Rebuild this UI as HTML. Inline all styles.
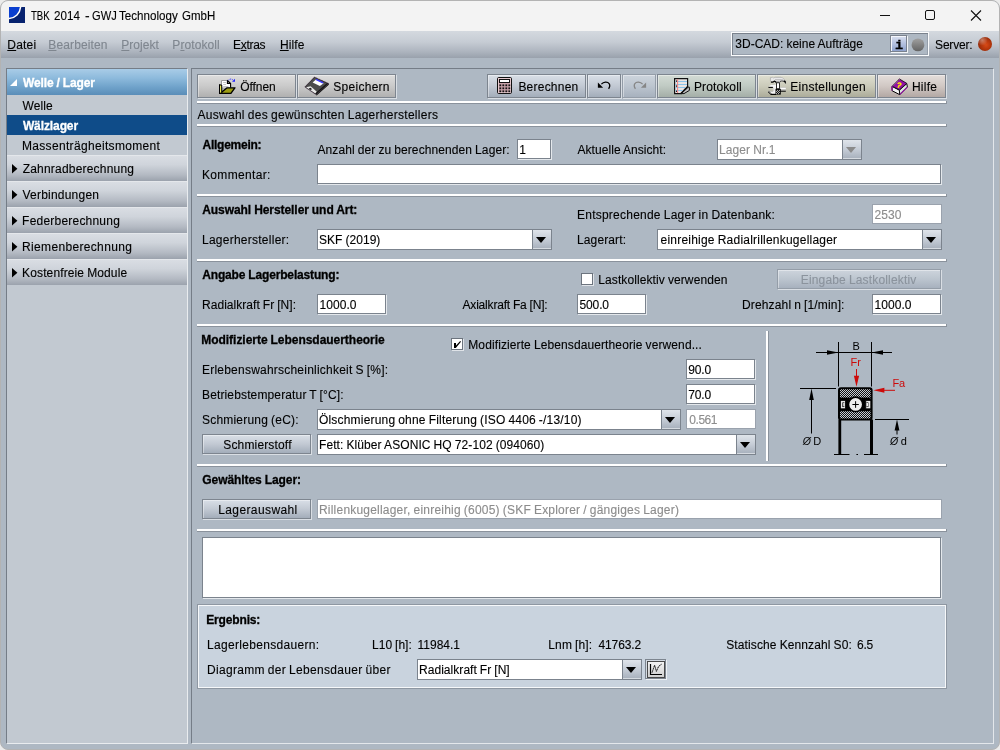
<!DOCTYPE html>
<html lang="de">
<head>
<meta charset="utf-8">
<title>TBK 2014 - GWJ Technology GmbH</title>
<style>
html,body{margin:0;padding:0;}
body{width:1000px;height:750px;overflow:hidden;background:#ebebeb;font-family:"Liberation Sans",sans-serif;font-size:12px;color:#000;}
#win{position:absolute;left:0;top:0;width:1000px;height:750px;background:#aeb8c3;border-radius:8px;overflow:hidden;border:1px solid #b3b3b3;box-sizing:border-box;}
#o{position:absolute;left:-1px;top:-1px;width:1000px;height:750px;will-change:transform;}
.a{position:absolute;box-sizing:border-box;}
.t{position:absolute;white-space:pre;line-height:14px;height:14px;-webkit-text-stroke:0.12px currentColor;}
.b{font-weight:bold;-webkit-text-stroke:0.3px currentColor;}
u{text-decoration:underline;text-underline-offset:1px;text-decoration-thickness:1px;}
.sep{position:absolute;left:197px;width:750px;height:3px;box-sizing:border-box;background:#fff;border-right:1px solid #8a929c;border-bottom:1px solid #8a929c;}
.inp{position:absolute;box-sizing:border-box;background:#fff;border:1px solid #7b838d;box-shadow:1px 1px 0 #e4e8ec;height:20px;}
.inp.off{border-color:#9aa2ad;box-shadow:none;}
.btn{position:absolute;box-sizing:border-box;border:1px solid #7d858f;box-shadow:1px 1px 0 #d9dee4, inset 1px 1px 0 rgba(255,255,255,.4);background:linear-gradient(#dddddd,#cacaca 50%,#b0b0b0);height:24px;}
.btn.blue{background:linear-gradient(#d9dfe7,#c2c9d3 50%,#a3adba);}
.btn.off{background:linear-gradient(#cdd4dc,#bcc5cf 50%,#a7b1be);border-color:#949da8;}
.btn.green{background:linear-gradient(#d3dbd5,#c0cac3 50%,#a4aea7);}
.btn.olive{background:linear-gradient(#dfdfd1,#cbcbba 50%,#acac9a);}
.btn.rose{background:linear-gradient(#e4dedb,#d1c8c4 50%,#b3a8a4);}
.cat{position:absolute;left:7px;width:180px;height:26px;box-sizing:border-box;background:linear-gradient(#d9dde3 0%,#cfd4db 35%,#b4bac3 75%,#9ba2ad 100%);border-top:1px solid #e4e7eb;}
.cat svg{position:absolute;left:5px;top:8px;}
.combo{position:absolute;box-sizing:border-box;height:21px;border:1px solid #7b838d;background:#fff;}
.combo b{position:absolute;right:0;top:0;bottom:0;width:19px;box-sizing:border-box;background:linear-gradient(#dfe4ea,#c5ccd6 50%,#a6afbb);border-left:1px solid #7b838d;box-shadow:inset 0 -1px 0 #d5dae0;}
.combo b:after{content:"";position:absolute;left:3px;top:7px;border-top:6px solid #000;border-left:5px solid transparent;border-right:5px solid transparent;}
.combo.off b:after{border-top-color:#8a8a8a;}
.chk{position:absolute;box-sizing:border-box;width:12px;height:12px;background:#fff;border:1px solid #6c747e;box-shadow:1px 1px 0 #dfe3e8;}

</style>
</head>
<body>
<div id="win"><div id="o">
<div class="a" style="left:1px;top:1px;width:998px;height:30px;background:#f3f3f3;"></div>
<div class="a" style="left:1px;top:31px;width:998px;height:27px;background:linear-gradient(#d4d9df 0%,#c6ccd4 40%,#aeb5bf 75%,#99a1ac 100%);"></div>
<svg class="a" style="left:870px;top:1px" width="128" height="30" viewBox="0 0 128 30"><g stroke="#111" stroke-width="1" fill="none"><path d="M10 14.5H20"/><rect x="55.5" y="9.5" width="9" height="9" rx="1.5"/><path d="M101 9.5L111 19.5M111 9.5L101 19.5" stroke-width="1.1"/></g></svg>
<!-- 3D-CAD box -->
<div class="a" style="left:731px;top:32px;width:198px;height:24px;border:1px solid #fbfcfd;box-shadow:inset 1px 1px 0 #7a828d, inset -1px -1px 0 #959eaa;background:#aeb8c3;"></div>
<div class="a" style="left:890px;top:35px;width:17px;height:17px;border:1px solid #7a828e;box-shadow:1px 1px 0 #f2f4f7, inset 1px 1px 0 #f4f6fb;background:linear-gradient(#d9e0f0,#b4c1df 50%,#8fa3cd);"></div>
<div class="t b" style="left:894.9px;top:37.9px;font-family:'Liberation Mono',monospace;font-size:13.6px;line-height:16px;height:16px;">i</div>
<svg class="a" style="left:910px;top:37px" width="16" height="16" viewBox="910 37 16 16"><defs><linearGradient id="gc" x1="0" y1="0" x2="0" y2="1"><stop offset="0" stop-color="#a0a0a0"/><stop offset="0.5" stop-color="#828282"/><stop offset="1" stop-color="#646464"/></linearGradient></defs><circle cx="917.95" cy="44.9" r="6.4" fill="url(#gc)"/></svg>
<div class="a" style="left:978px;top:37px;width:14px;height:14px;border-radius:50%;background:radial-gradient(circle at 30% 22%,rgba(255,255,255,.38) 0%,rgba(255,255,255,0) 38%),radial-gradient(circle at 58% 56%,#d84a17 0%,#b9380c 35%,#942a09 70%,#7a2207 100%);"></div>

<!-- sidebar -->
<div class="a" style="left:6px;top:68px;width:182px;height:676px;background:#c2c9d1;border:1px solid;border-color:#757d87 #e9ecef #e9ecef #757d87;"></div>
<div class="a" style="left:7px;top:69px;width:180px;height:26px;background:linear-gradient(#a9cce7 0%,#8dbadc 35%,#6fa2ca 70%,#5a8db8 100%);"></div>
<div class="a" style="left:10px;top:79px;width:0;height:0;border-bottom:7px solid #fff;border-left:7px solid transparent;"></div>
<div class="a" style="left:7px;top:115px;width:180px;height:20px;background:#0f4c89;"></div>
<div class="cat" style="top:155px"><svg width="6" height="10" viewBox="0 0 6 10"><path d="M0 0L5.4 4.75L0 9.5Z" fill="#000"/></svg></div>
<div class="cat" style="top:181px"><svg width="6" height="10" viewBox="0 0 6 10"><path d="M0 0L5.4 4.75L0 9.5Z" fill="#000"/></svg></div>
<div class="cat" style="top:207px"><svg width="6" height="10" viewBox="0 0 6 10"><path d="M0 0L5.4 4.75L0 9.5Z" fill="#000"/></svg></div>
<div class="cat" style="top:233px"><svg width="6" height="10" viewBox="0 0 6 10"><path d="M0 0L5.4 4.75L0 9.5Z" fill="#000"/></svg></div>
<div class="cat" style="top:259px"><svg width="6" height="10" viewBox="0 0 6 10"><path d="M0 0L5.4 4.75L0 9.5Z" fill="#000"/></svg></div>

<!-- main panel -->
<div class="a" style="left:191px;top:68px;width:803px;height:676px;border:1px solid;border-color:#757d87 #e3e7eb #e3e7eb #757d87;"></div>
<!-- toolbar -->
<div class="btn" style="left:197px;top:74px;width:99px;"></div>
<div class="btn" style="left:297px;top:74px;width:99px;"></div>
<div class="btn blue" style="left:487px;top:74px;width:99px;"></div>
<div class="btn blue" style="left:587px;top:74px;width:34px;"></div>
<div class="btn off" style="left:622px;top:74px;width:34px;"></div>
<div class="btn green" style="left:657px;top:74px;width:99px;"></div>
<div class="btn olive" style="left:757px;top:74px;width:119px;"></div>
<div class="btn rose" style="left:877px;top:74px;width:69px;"></div>

<div class="sep" style="top:101px"></div>
<div class="sep" style="top:124px"></div>
<div class="sep" style="top:194px"></div>
<div class="sep" style="top:259px"></div>
<div class="sep" style="top:324px"></div>
<div class="sep" style="top:464px"></div>
<div class="sep" style="top:529px"></div>
<div class="a" style="left:766px;top:331px;width:3px;height:130px;background:#fff;border-right:1px solid #8a929c;"></div>

<div class="inp" style="left:517px;top:139px;width:34px;"></div>
<div class="combo off" style="left:717px;top:139px;width:145px;"><b></b></div>
<div class="inp" style="left:317px;top:164px;width:624px;"></div>

<div class="inp off" style="left:872px;top:204px;width:70px;"></div>
<div class="combo" style="left:317px;top:229px;width:235px;"><b></b></div>
<div class="combo" style="left:657px;top:229px;width:285px;"><b></b></div>

<div class="chk" style="left:581px;top:273px;"></div>
<div class="btn off" style="left:777px;top:269px;width:164px;height:20px;"></div>
<div class="inp" style="left:317px;top:294px;width:69px;"></div>
<div class="inp" style="left:577px;top:294px;width:69px;"></div>
<div class="inp" style="left:872px;top:294px;width:69px;"></div>

<div class="chk" style="left:451px;top:338px;"></div>
<div class="inp" style="left:686px;top:359px;width:69px;"></div>
<div class="inp" style="left:686px;top:384px;width:69px;"></div>
<div class="combo" style="left:317px;top:409px;width:364px;"><b></b></div>
<div class="inp off" style="left:686px;top:409px;width:70px;"></div>
<div class="btn blue" style="left:202px;top:434px;width:109px;height:20px;"></div>
<div class="combo" style="left:317px;top:434px;width:439px;"><b></b></div>

<div class="btn blue" style="left:202px;top:499px;width:109px;height:20px;"></div>
<div class="inp off" style="left:317px;top:499px;width:625px;"></div>
<div class="inp" style="left:202px;top:537px;width:739px;height:61px;"></div>

<div class="a" style="left:197px;top:604px;width:750px;height:85px;background:#c9d3de;border:1px solid #8e97a2;box-shadow:inset 0 0 0 1px #f6f8fa;"></div>
<div class="combo" style="left:417px;top:659px;width:225px;"><b></b></div>
<div class="btn" style="left:645px;top:659px;width:21px;height:20px;background:#d3dae2;box-shadow:1px 1px 0 #eef1f4;"></div>

<svg class="a" style="left:9px;top:7px" width="16" height="16" viewBox="0 0 16 16"><rect width="16" height="16" fill="#07226f"/><path d="M0 0H11C10.5 6 6 10.5 0 11Z" fill="#0a3fd0"/><path d="M11.6 0C11 6.4 6.4 11 0 11.6" fill="none" stroke="#fff" stroke-width="1.5"/></svg>
<!-- open -->
<svg class="a" style="left:219px;top:78px" width="17" height="16" viewBox="0 0 17 16">
<path d="M2.5 2.5H8.2L11.5 5.6V10H2.5Z" fill="#fff" stroke="#9a9a9a"/>
<path d="M4.2 4.5H7M4.2 6.5H7M4.2 8.5H9.5" stroke="#c4c4c4"/>
<path d="M8.2 2.2L11.6 5.6V9.5M8.4 2.5V5.4H11" fill="none" stroke="#000" stroke-width="1.1"/>
<path d="M0.6 6.8V15.4H11.9L15.9 9.9H7.8L2.6 14.2V7.5Z" fill="#9c9c12" stroke="#000" stroke-width="1.35" stroke-linejoin="round"/>
<path d="M1.6 7.4V14.6" stroke="#e4e450" stroke-width="1.2"/>
<path d="M9.2 2.4C10.3 0.6 13 0.6 14.3 2.4" fill="none" stroke="#3a3aff" stroke-width="0.9" stroke-dasharray="1.2 0.8"/>
<path d="M16 0.8V3.8H13Z" fill="#2222ff"/>
</svg>
<!-- save -->
<svg class="a" style="left:304px;top:76px" width="26" height="20" viewBox="304 76 26 20">
<path d="M314.4 77L328.8 83.6L316.2 94.8L304.8 87Z" fill="#161616" stroke="#4a2a4a" stroke-width="0.7" stroke-dasharray="1 0.7"/><path d="M314.4 77.6L326.8 83.3L315.6 93L305.6 86.8Z" fill="#4c4c4c"/>
<path d="M316 79.4L323.6 83.2L319.9 86L312.6 82.4Z" fill="#fff"/>
<path d="M316.3 78.7L323.6 82.2L322.6 83.4L315.6 79.9Z" fill="#3a3aff"/>
<path d="M306 87.2L310.6 86.2L316.6 91.6L315.4 93.6Z" fill="#e8e8e8"/>
<path d="M308.6 88.4L310.6 87.8L312.2 89.2L310 90Z" fill="#222"/>
<path d="M316.2 94.8L328.8 83.6L328.8 84.8L316.6 95.4Z" fill="#111"/>
</svg>
<!-- calc -->
<svg class="a" style="left:497px;top:77px" width="16" height="17" viewBox="0 0 16 17">
<rect x="0.5" y="0.5" width="14" height="16" rx="1.2" fill="#c9a3aa" stroke="#111"/>
<rect x="1.5" y="1.5" width="12" height="14" fill="none" stroke="#ecd3d8" stroke-width="0.8"/>
<rect x="2.5" y="2.5" width="10" height="3" fill="#fff" stroke="#111"/>
<g fill="#111"><rect x="2.4" y="7.4" width="1.8" height="1.8"/><rect x="5.4" y="7.4" width="1.8" height="1.8"/><rect x="8.4" y="7.4" width="1.8" height="1.8"/><rect x="11.4" y="7.4" width="1.8" height="1.8"/>
<rect x="2.4" y="10.4" width="1.8" height="1.8"/><rect x="5.4" y="10.4" width="1.8" height="1.8"/><rect x="8.4" y="10.4" width="1.8" height="1.8"/><rect x="11.4" y="10.4" width="1.8" height="1.8"/>
<rect x="2.4" y="13.4" width="1.8" height="1.8"/><rect x="5.4" y="13.4" width="1.8" height="1.8"/><rect x="8.4" y="13.4" width="1.8" height="1.8"/><rect x="11.4" y="13.4" width="1.8" height="1.8"/></g>
</svg>
<!-- undo / redo -->
<svg class="a" style="left:587px;top:74px" width="70" height="24" viewBox="587 74 70 24">
<path d="M597.9 82.4V87.8H603.1Z" fill="#000"/>
<path d="M601.4 84.2C603.5 81.6 607.6 81.2 609.3 83.8C610.3 85.6 609.6 87.4 608.6 88.8" fill="none" stroke="#000" stroke-width="1.2"/>
<path d="M646.1 82.4V87.8H640.9Z" fill="#868686"/>
<path d="M642.6 84.2C640.5 81.6 636.4 81.2 634.7 83.8C633.7 85.6 634.4 87.4 635.4 88.8" fill="none" stroke="#868686" stroke-width="1.2"/>
</svg>
<!-- protokoll -->
<svg class="a" style="left:674px;top:78px" width="17" height="17" viewBox="674 78 17 17">
<path d="M674.6 78.6H687.6V86.4L680.6 93.6H674.6Z" fill="#e9e5e3" stroke="#111" stroke-width="1.2"/>
<path d="M675.4 81.5H687M675.4 84.5H687M675.4 87.5H685.5M675.4 90.5H682.5" stroke="#8cc4ea" stroke-width="1"/>
<path d="M677.6 79.2V93" stroke="#f08888" stroke-width="1.1"/>
<g fill="#222"><rect x="676" y="80.4" width="1" height="1.4"/><rect x="676" y="85.4" width="1" height="1.4"/><rect x="676" y="90.6" width="1" height="1.4"/></g>
<path d="M688 86.6L680.8 94" stroke="#111" stroke-width="1.3"/>
<path d="M688.2 87.2H689.4V90.4L684 93.6H681.4Z" fill="#c2c2c2" stroke="#111" stroke-width="1"/>
</svg>
<!-- einstellungen -->
<svg class="a" style="left:767px;top:76px" width="20" height="20" viewBox="0 0 20 20">
<path d="M1.5 11.1L3 9.6L5.4 8.4L7.6 8.3L9.4 9V17.4L8.2 18.4H4.2L1.6 15.9L1.2 15.3H5.9V11.7H1.5Z" fill="#f5f5f5"/>
<path d="M5 8.4H7.8" stroke="#a8a8a8" stroke-width="0.5"/>
<path d="M6.3 11.6C7 12.8 7 14.2 6.3 15.4" fill="none" stroke="#bdbdbd" stroke-width="0.9"/>
<path d="M1.4 11.4H5.9" stroke="#000" stroke-width="1.1"/>
<path d="M1.1 15.3H5.9" stroke="#8c8c8c" stroke-width="0.5"/>
<path d="M1.5 15.8L4.2 18.4" stroke="#000" stroke-width="1.4" stroke-dasharray="1.1 0.35"/>
<path d="M3.9 18.4H9" stroke="#000" stroke-width="1.2"/>
<rect x="13" y="11" width="5.8" height="0.6" fill="#9a9a9a"/><rect x="13" y="11.6" width="5.8" height="1.6" fill="#fdfdfd"/><rect x="13" y="13.2" width="5.8" height="1.5" fill="#c6c6c6"/><rect x="13" y="14.7" width="5.8" height="1" fill="#000"/>
<path d="M3.4 1.7L5.6 1.3L6.4 2L8.2 1.3H14C16 1.8 17.4 3 18 4.4L18.8 7.6L17.6 6C16.8 5 15.4 4.9 13.4 5L12.8 6.8H9.4L8.6 5.6L7.4 4.9L5.8 5.8H4L3.4 5Z" fill="#e9e9e9" stroke="#9a9a9a" stroke-width="0.5"/>
<path d="M3.5 1.7V5M8.3 1.4H14" fill="none" stroke="#b4b4b4" stroke-width="0.5"/>
<path d="M8 3.6H13.4C15 3.6 16.4 4 17.4 4.8" fill="none" stroke="#c2c2c2" stroke-width="1.3"/>
<rect x="9.5" y="4.9" width="3.1" height="2" fill="#a6a6a6"/>
<path d="M3.9 6.1H5.9L7.4 5.2L8.6 5.8L9.3 6.7" fill="none" stroke="#000" stroke-width="1.2"/>
<path d="M13 5.75C14.8 5 16.6 5.2 17.5 6.2L18.7 7.9L18.9 5.4L17.6 4.2L16.8 4.9C15.4 4.7 14 4.8 13 5.1Z" fill="#000"/>
<rect x="9.6" y="6.8" width="2.9" height="6" fill="#fff" stroke="#000" stroke-width="0.8"/>
<rect x="8.5" y="12.8" width="5.3" height="5.8" fill="#050505"/>
<g fill="#e4e4e4"><rect x="10" y="13.9" width="0.9" height="0.9"/><rect x="12" y="13.9" width="0.9" height="0.9"/><rect x="9" y="14.9" width="0.9" height="0.9"/><rect x="11" y="14.9" width="0.9" height="0.9"/><rect x="10" y="15.9" width="0.9" height="0.9"/><rect x="12" y="15.9" width="0.9" height="0.9"/><rect x="9" y="16.9" width="0.9" height="0.9"/><rect x="11" y="16.9" width="0.9" height="0.9"/></g>
</svg>
<!-- hilfe -->
<svg class="a" style="left:890.5px;top:78.3px" width="18" height="18" viewBox="890 78 18 18">
<path d="M891 86.4L898.4 90.2L898.6 94.6L891.2 90.8Z" fill="#f4f4f4" stroke="#000" stroke-width="1"/>
<path d="M898.4 90.2L905.8 83.6L906.4 87L898.8 94.6Z" fill="#dfe8df" stroke="#000" stroke-width="0.9"/>
<path d="M898.4 79L905.8 83.4L898.4 89.8L891.2 86.2Z" fill="#9412a6" stroke="#1a0a1a" stroke-width="0.9"/>
<path d="M891 86.2V90.6" stroke="#9412a6" stroke-width="1.4"/>
<path d="M898.9 94.4L906.2 87.2" stroke="#9412a6" stroke-width="1.1"/>
<path d="M898.2 79.6L891.8 85.8" stroke="#d9b8de" stroke-width="0.8" stroke-dasharray="0.8 0.8"/>
<text x="896" y="87.8" font-family="Liberation Sans, sans-serif" font-weight="bold" font-size="7.5" fill="#fff200" stroke="#fff200" stroke-width="0.4" transform="rotate(16 898.5 84.5)">?</text>
</svg>
<!-- check -->
<svg class="a" style="left:451px;top:338px" width="12" height="12" viewBox="451 338 12 12"><path d="M454 343H456V345.6L460.2 341L461 341.8L455.8 348H454Z" fill="#000"/></svg>
<!-- chart button icon -->
<svg class="a" style="left:647px;top:661px" width="18" height="17" viewBox="647 661 18 17">
<defs><linearGradient id="cg" x1="0" y1="0" x2="0" y2="1"><stop offset="0" stop-color="#f4f4f4"/><stop offset="1" stop-color="#cfcfcf"/></linearGradient></defs>
<rect x="647.5" y="661.5" width="17" height="16" fill="url(#cg)" stroke="#4a4a4a"/>
<path d="M650.5 664V674.5H662" fill="none" stroke="#000" stroke-width="1.2"/>
<path d="M652 672.6L654.6 665.2L656.4 671.4L658.6 666.4L661.6 664.2" fill="none" stroke="#000" stroke-width="1" stroke-dasharray="1.4 0.6"/>
</svg>
<!-- bearing diagram -->
<svg class="a" style="left:795px;top:335px" width="120" height="125" viewBox="795 335 120 125">
<defs><pattern id="ht" width="2" height="2" patternUnits="userSpaceOnUse"><rect width="2" height="2" fill="#111"/><rect width="1" height="1" fill="#c8cdd4"/><rect x="1" y="1" width="1" height="1" fill="#c8cdd4"/></pattern></defs>
<g stroke="#000" stroke-width="1" fill="none">
<path d="M838.5 342V386.5M871.5 342V386.5"/>
<path d="M816 352.5H892"/>
<path d="M800 388.5H836"/>
<path d="M811.5 399V433.5"/>
<path d="M875 419.5H909"/>
<path d="M897 430V434.5"/>
<path d="M834 454.5H849.5M856.4 454.5H858M864 454.5H878"/>
</g>
<g fill="#000">
<path d="M838.5 352.5L827 350.3V354.7Z"/><path d="M871.5 352.5L883 350.3V354.7Z"/>
<path d="M811.5 388.5L809.2 400H813.8Z"/>
<path d="M897 419.6L894.6 430.6H899.4Z"/>
</g>
<g fill="#cc0a0a" stroke="none">
<path d="M856.5 386.8L853.9 375.8H859.1Z"/><rect x="856" y="369" width="1" height="8"/>
<path d="M873.4 390.3L884.4 387.8V392.8Z"/><rect x="883" y="389.8" width="12" height="1"/>
</g>
<rect x="839" y="388.2" width="32.6" height="31.4" rx="2" fill="url(#ht)" stroke="#000" stroke-width="2"/>
<rect x="840" y="397.6" width="30.6" height="13.6" fill="#000"/>
<rect x="840.4" y="400.4" width="5" height="8.4" fill="#e8e8e8" stroke="#000" stroke-width="0.8"/><rect x="842.4" y="402.4" width="2" height="4.6" fill="#000"/><rect x="843.2" y="403" width="1.6" height="3.4" fill="#eee"/>
<rect x="865.8" y="400.4" width="5" height="8.4" fill="#e8e8e8" stroke="#000" stroke-width="0.8"/><rect x="866.4" y="402.4" width="2" height="4.6" fill="#000"/><rect x="866.4" y="403" width="1.6" height="3.4" fill="#eee"/>
<circle cx="855.6" cy="404.4" r="7.2" fill="#ececec" stroke="#000" stroke-width="1.7"/>
<path d="M852.4 404.5H858.8M855.6 401.2V407.8" stroke="#000" stroke-width="1"/>
<rect x="838.4" y="419.5" width="2.8" height="35" fill="#000"/><rect x="870" y="419.5" width="3" height="35" fill="#000"/>
<g font-family="Liberation Sans, sans-serif" font-size="11px">
<text x="852.6" y="349.6" fill="#000">B</text>
<text x="850.6" y="365.6" fill="#cc0a0a">Fr</text>
<text x="892.4" y="386.8" fill="#cc0a0a">Fa</text>
<text x="802.8" y="445" fill="#000"><tspan font-style="italic" font-size="10.5px">Ø</tspan><tspan dx="2.2">D</tspan></text>
<text x="890" y="445" fill="#000"><tspan font-style="italic" font-size="10.5px">Ø</tspan><tspan dx="2.6">d</tspan></text>
</g>
</svg>

<div class="t" style="left:31.30px;top:9px;transform:scaleX(0.800);transform-origin:0 0;color:#000;">TBK</div>
<div class="t" style="left:54.23px;top:9px;transform:scaleX(0.968);transform-origin:0 0;color:#000;">2014</div>
<div class="t" style="left:84.90px;top:9px;transform:scaleX(1.150);transform-origin:0 0;color:#000;">-</div>
<div class="t" style="left:91.97px;top:9px;transform:scaleX(0.928);transform-origin:0 0;color:#000;">GWJ</div>
<div class="t" style="left:119.10px;top:9px;transform:scaleX(0.967);transform-origin:0 0;color:#000;">Technology</div>
<div class="t" style="left:182.34px;top:9px;transform:scaleX(0.958);transform-origin:0 0;color:#000;">GmbH</div>
<div class="t" style="left:7.30px;top:38px;letter-spacing:0.200px;"><u>D</u>atei</div>
<div class="t" style="left:48.30px;top:38px;letter-spacing:0.133px;color:#7f868f;"><u>B</u>earbeiten</div>
<div class="t" style="left:121.30px;top:38px;letter-spacing:0.033px;color:#7f868f;"><u>P</u>rojekt</div>
<div class="t" style="left:172.30px;top:38px;letter-spacing:0.075px;color:#7f868f;">P<u>r</u>otokoll</div>
<div class="t" style="left:233.10px;top:38px;letter-spacing:-0.320px;">E<u>x</u>tras</div>
<div class="t" style="left:279.90px;top:38px;letter-spacing:0.150px;"><u>H</u>ilfe</div>
<div class="t" style="left:735.30px;top:37px;letter-spacing:0.014px;word-spacing:-0.348px;">3D-CAD: keine Aufträge</div>
<div class="t" style="left:935.10px;top:38px;letter-spacing:-0.200px;">Server:</div>
<div class="t b" style="left:22.90px;top:76px;letter-spacing:-0.113px;word-spacing:-0.221px;color:#fff;">Welle / Lager</div>
<div class="t" style="left:22.50px;top:99px;letter-spacing:0.100px;">Welle</div>
<div class="t b" style="left:22.90px;top:119px;letter-spacing:-0.100px;color:#fff;">Wälzlager</div>
<div class="t" style="left:21.90px;top:139px;letter-spacing:0.330px;">Massenträgheitsmoment</div>
<div class="t" style="left:22.70px;top:162px;letter-spacing:0.200px;">Zahnradberechnung</div>
<div class="t" style="left:22.50px;top:188px;letter-spacing:0.218px;">Verbindungen</div>
<div class="t" style="left:22.10px;top:214px;letter-spacing:0.214px;">Federberechnung</div>
<div class="t" style="left:22.10px;top:240px;letter-spacing:0.333px;">Riemenberechnung</div>
<div class="t" style="left:22.10px;top:266px;letter-spacing:0.121px;word-spacing:-0.455px;">Kostenfreie Module</div>
<div class="t" style="left:240.20px;top:80px;letter-spacing:-0.060px;">Öffnen</div>
<div class="t" style="left:333.30px;top:80px;letter-spacing:0.275px;">Speichern</div>
<div class="t" style="left:518.40px;top:80px;letter-spacing:0.225px;">Berechnen</div>
<div class="t" style="left:694.00px;top:80px;letter-spacing:0.112px;">Protokoll</div>
<div class="t" style="left:790.30px;top:80px;letter-spacing:0.267px;">Einstellungen</div>
<div class="t" style="left:911.90px;top:80px;letter-spacing:0.275px;">Hilfe</div>
<div class="t" style="left:197.50px;top:108px;letter-spacing:0.278px;word-spacing:-0.612px;">Auswahl des gewünschten Lagerherstellers</div>
<div class="t b" style="left:202.50px;top:138px;letter-spacing:-0.250px;">Allgemein:</div>
<div class="t" style="left:317.50px;top:143px;letter-spacing:0.094px;word-spacing:-0.428px;">Anzahl der zu berechnenden Lager:</div>
<div class="t" style="left:519.30px;top:143px;">1</div>
<div class="t" style="left:577.50px;top:143px;letter-spacing:0.056px;word-spacing:-0.390px;">Aktuelle Ansicht:</div>
<div class="t" style="left:719.00px;top:143px;letter-spacing:0.104px;word-spacing:-0.438px;color:#8c8c8c;">Lager Nr.1</div>
<div class="t" style="left:202.00px;top:168px;letter-spacing:0.333px;">Kommentar:</div>
<div class="t b" style="left:202.25px;top:203px;letter-spacing:-0.065px;word-spacing:-0.269px;">Auswahl Hersteller und Art:</div>
<div class="t" style="left:577.00px;top:208px;letter-spacing:0.233px;word-spacing:-0.567px;">Entsprechende Lager in Datenbank:</div>
<div class="t" style="left:874.50px;top:208px;letter-spacing:0.083px;color:#8c8c8c;">2530</div>
<div class="t" style="left:202.00px;top:233px;letter-spacing:0.250px;">Lagerhersteller:</div>
<div class="t" style="left:319.00px;top:233px;letter-spacing:0.042px;word-spacing:-0.376px;">SKF (2019)</div>
<div class="t" style="left:577.00px;top:233px;letter-spacing:0.125px;">Lagerart:</div>
<div class="t" style="left:660.50px;top:233px;letter-spacing:0.220px;word-spacing:-0.554px;">einreihige Radialrillenkugellager</div>
<div class="t b" style="left:202.25px;top:268px;letter-spacing:-0.158px;word-spacing:-0.176px;">Angabe Lagerbelastung:</div>
<div class="t" style="left:598.25px;top:273px;letter-spacing:0.099px;word-spacing:-0.433px;">Lastkollektiv verwenden</div>
<div class="t" style="left:800.75px;top:273px;letter-spacing:0.162px;word-spacing:-0.496px;color:#8b939d;">Eingabe Lastkollektiv</div>
<div class="t" style="left:202.00px;top:298px;letter-spacing:0.042px;word-spacing:-0.376px;">Radialkraft Fr [N]:</div>
<div class="t" style="left:319.50px;top:298px;letter-spacing:0.050px;">1000.0</div>
<div class="t" style="left:462.50px;top:298px;letter-spacing:-0.189px;word-spacing:-0.145px;">Axialkraft Fa [N]:</div>
<div class="t" style="left:579.50px;top:298px;letter-spacing:-0.125px;">500.0</div>
<div class="t" style="left:742.00px;top:298px;letter-spacing:0.151px;word-spacing:-0.485px;">Drehzahl n [1/min]:</div>
<div class="t" style="left:874.50px;top:298px;letter-spacing:0.050px;">1000.0</div>
<div class="t b" style="left:201.25px;top:333px;letter-spacing:-0.032px;word-spacing:-0.302px;">Modifizierte Lebensdauertheorie</div>
<div class="t" style="left:468.25px;top:338px;letter-spacing:0.107px;word-spacing:-0.441px;">Modifizierte Lebensdauertheorie verwend...</div>
<div class="t" style="left:202.00px;top:363px;letter-spacing:0.222px;word-spacing:-0.556px;">Erlebenswahrscheinlichkeit S [%]:</div>
<div class="t" style="left:688.25px;top:363px;letter-spacing:-0.167px;">90.0</div>
<div class="t" style="left:202.00px;top:388px;letter-spacing:0.138px;word-spacing:-0.472px;">Betriebstemperatur T [°C]:</div>
<div class="t" style="left:688.25px;top:388px;letter-spacing:-0.167px;">70.0</div>
<div class="t" style="left:202.00px;top:413px;letter-spacing:0.202px;word-spacing:-0.536px;">Schmierung (eC):</div>
<div class="t" style="left:319.00px;top:413px;letter-spacing:0.185px;word-spacing:-0.520px;">Ölschmierung ohne Filterung (ISO 4406 -/13/10)</div>
<div class="t" style="left:689.25px;top:413px;letter-spacing:-0.438px;color:#8c8c8c;">0.561</div>
<div class="t" style="left:223.25px;top:438px;letter-spacing:0.159px;">Schmierstoff</div>
<div class="t" style="left:319.00px;top:438px;letter-spacing:0.091px;word-spacing:-0.425px;">Fett: Klüber ASONIC HQ 72-102 (094060)</div>
<div class="t b" style="left:202.25px;top:473px;letter-spacing:-0.065px;word-spacing:-0.269px;">Gewähltes Lager:</div>
<div class="t" style="left:218.25px;top:503px;letter-spacing:0.386px;">Lagerauswahl</div>
<div class="t" style="left:319.00px;top:503px;letter-spacing:0.208px;word-spacing:-0.542px;color:#8c8c8c;">Rillenkugellager, einreihig (6005) (SKF Explorer / gängiges Lager)</div>
<div class="t b" style="left:206.25px;top:613px;letter-spacing:-0.156px;">Ergebnis:</div>
<div class="t" style="left:207.00px;top:638px;letter-spacing:0.309px;">Lagerlebensdauern:</div>
<div class="t" style="left:372.00px;top:638px;letter-spacing:0.014px;word-spacing:-0.348px;">L10 [h]:</div>
<div class="t" style="left:417.50px;top:638px;">11984.1</div>
<div class="t" style="left:548.25px;top:638px;letter-spacing:0.139px;word-spacing:-0.473px;">Lnm [h]:</div>
<div class="t" style="left:598.50px;top:638px;letter-spacing:-0.125px;">41763.2</div>
<div class="t" style="left:726.25px;top:638px;letter-spacing:0.114px;word-spacing:-0.448px;">Statische Kennzahl S0:</div>
<div class="t" style="left:857.00px;top:638px;letter-spacing:-0.250px;">6.5</div>
<div class="t" style="left:207.00px;top:663px;letter-spacing:0.310px;word-spacing:-0.644px;">Diagramm der Lebensdauer über</div>
<div class="t" style="left:419.00px;top:663px;letter-spacing:0.045px;word-spacing:-0.379px;">Radialkraft Fr [N]</div>
</div></div>
</body>
</html>
